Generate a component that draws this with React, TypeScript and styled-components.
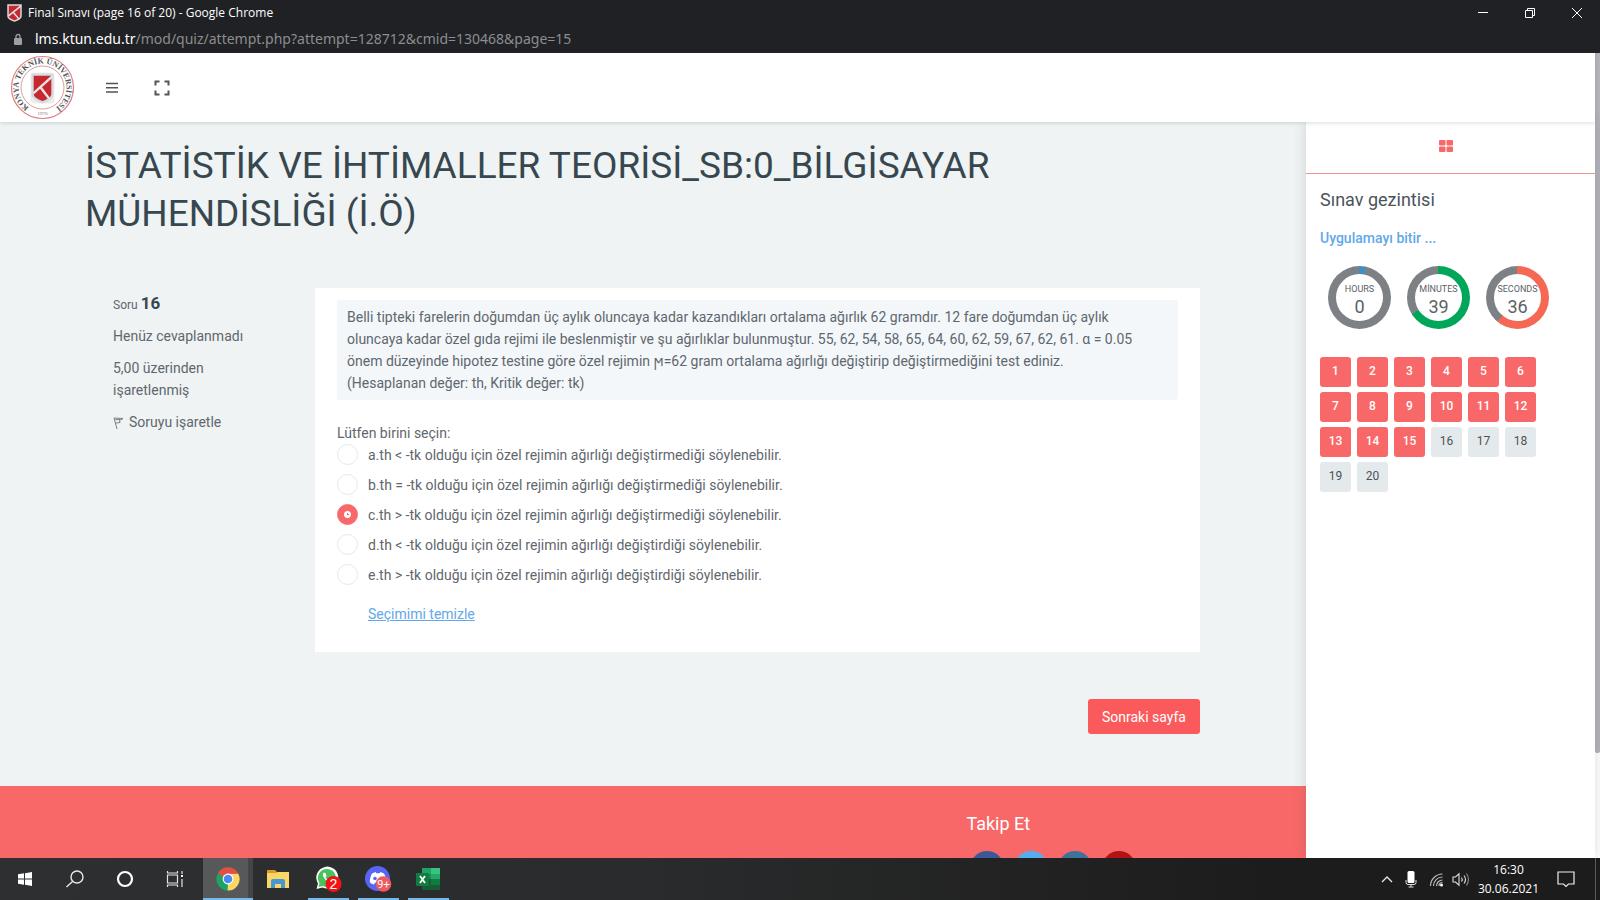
import React, { useState } from "react";
import styled, { createGlobalStyle, css } from "styled-components";

const GlobalStyle = createGlobalStyle`
  * { box-sizing: border-box; }
  body { margin: 0; overflow: hidden; background: #eff3f4; }
  body, button, input { font-family: Roboto, "Noto Sans", sans-serif; }
  h1, h2, h3, p, ul, ol, fieldset, legend { margin: 0; padding: 0; border: 0; font-weight: 400; }
  ul, ol { list-style: none; }
  button { border: 0; background: none; padding: 0; color: inherit; cursor: pointer; }
  svg { display: block; flex: none; }
`;

const Screen = styled.div`
  height: 100vh;
  display: flex;
  flex-direction: column;
  color: #5f676e;
  font-size: 14px;
  line-height: 22px;
`;

/* Browser window */
const TitleBar = styled.div`
  flex: none;
  display: flex;
  align-items: center;
  height: 25px;
  padding: 0 0 0 7px;
  gap: 6px;
  background: #202124;
  color: #fff;
  font: 12px/24px "Open Sans", sans-serif;
`;
const WindowControls = styled.div`
  margin-left: auto;
  display: flex;
  align-items: center;
`;
const WindowButton = styled.button`
  width: 47px;
  height: 24px;
  display: grid;
  place-items: center;
`;
const AddressBar = styled.div`
  flex: none;
  display: flex;
  align-items: center;
  height: 28px;
  padding: 0 12px;
  gap: 11px;
  background: #202124;
  color: #8b8d91;
  font: 14px/28px "Noto Sans", sans-serif;
  b { color: #fff; font-weight: 400; }
`;

/* Site */
const Site = styled.div`
  flex: 1;
  min-height: 0;
  display: flex;
`;
const SiteBody = styled.div`
  flex: 1;
  min-width: 0;
  display: flex;
  flex-direction: column;
`;
const ScrollTrack = styled.div`
  flex: none;
  width: 5px;
  background: #fff;
`;
const ScrollThumb = styled.div`
  height: 87%;
  background: #b3b3ba;
  border-radius: 0 0 2px 2px;
`;
const Header = styled.header`
  flex: none;
  z-index: 2;
  display: flex;
  align-items: center;
  height: 69px;
  padding-left: 10px;
  background: #fff;
  box-shadow: 0 1px 4px rgba(60, 75, 85, 0.2);
`;
const HeaderButton = styled.button`
  width: 50px;
  height: 48px;
  display: grid;
  place-items: center;
  color: #555;
`;
const HeaderTools = styled.div`
  display: flex;
  margin-left: 12px;
`;
const Columns = styled.div`
  flex: 1;
  min-height: 0;
  display: flex;
`;
const Main = styled.main`
  flex: 1;
  min-width: 0;
  display: flex;
  flex-direction: column;
  overflow: hidden;
`;
const Content = styled.div`
  flex: none;
  padding: 20px 106px 52px 85px;
`;
const Title = styled.h1`
  max-width: 960px;
  color: #37474f;
  font-size: 37px;
  line-height: 48px;
`;
const Question = styled.div`
  display: flex;
  align-items: flex-start;
  margin-top: 50px;
`;
const Info = styled.aside`
  flex: none;
  width: 230px;
  padding: 5px 60px 0 28px;
  display: flex;
  flex-direction: column;
  align-items: flex-start;
  gap: 10px;
`;
const QuestionNo = styled.h2`
  font-size: 12px;
  line-height: 20px;
  b { color: #37474f; font-size: 17px; font-weight: 700; }
`;
const FlagButton = styled.button`
  display: flex;
  align-items: center;
  gap: 5px;
  font-size: 14px;
  line-height: 22px;
`;
const Card = styled.section`
  flex: 1;
  min-width: 0;
  background: #fff;
  padding: 12px 22px 26px;
`;
const QuestionText = styled.p`
  padding: 6px 40px 6px 10px;
  border-radius: 3px;
  background: #f3f7fa;
`;
const Answers = styled.fieldset`
  margin-top: 22px;
`;
const Answer = styled.label`
  display: flex;
  align-items: flex-start;
  gap: 10px;
  height: 30px;
  cursor: pointer;
`;
const Radio = styled.input`
  appearance: none;
  flex: none;
  width: 21px;
  height: 21px;
  margin: 0;
  border: 1px solid #e4eaec;
  border-radius: 50%;
  background: #fff;
  &:checked {
    border-color: #f96868;
    background: radial-gradient(circle, #f96868 0 1px, #fff 1px 3px, #f96868 4px);
  }
`;
const ClearButton = styled.button`
  display: block;
  margin: 9px 0 0 31px;
  padding-bottom: 1px;
  color: #62a8ea;
  font-size: 14px;
  line-height: 22px;
  text-decoration: underline;
`;
const Pager = styled.div`
  display: flex;
  justify-content: flex-end;
  margin-top: 47px;
`;
const NextButton = styled.button`
  height: 35px;
  padding: 0 14px;
  border-radius: 3px;
  background: #fa5a5c;
  color: #fff;
  font-size: 14px;
`;
const Footer = styled.footer`
  flex: 1 0 auto;
  background: #f96868;
  color: #fff;
`;
const Follow = styled.div`
  width: 26%;
  margin-left: auto;
  padding: 26px 0 0;
`;
const FollowTitle = styled.h3`
  font-size: 18px;
  line-height: 24px;
`;
const Socials = styled.div`
  display: flex;
  gap: 10px;
  height: 21px;
  margin-top: 15px;
  padding-left: 4px;
  overflow: hidden;
`;
const Social = styled.a<{ $color: string }>`
  width: 34px;
  height: 34px;
  border-radius: 50%;
  background: ${(p) => p.$color};
`;

/* Quiz navigation drawer */
const Drawer = styled.aside`
  flex: none;
  z-index: 1;
  width: 289px;
  background: #fff;
  box-shadow: 0 0 12px rgba(60, 75, 85, 0.2);
`;
const DrawerTab = styled.button`
  width: 100%;
  height: 52px;
  padding: 0 9px 3px 0;
  display: grid;
  place-items: center;
  border-bottom: 1px solid #ee8f92;
`;
const DrawerBody = styled.div`
  padding: 14px;
`;
const DrawerTitle = styled.h2`
  color: #4a545c;
  font-size: 18px;
  line-height: 24px;
`;
const FinishLink = styled.a`
  display: inline-block;
  margin-top: 15px;
  color: #62a8ea;
  font-weight: 500;
  text-decoration: none;
`;
const Timers = styled.div`
  display: flex;
  gap: 16px;
  margin: 17px 0 28px 8px;
`;
const Timer = styled.div<{ $to: number; $color: string }>`
  width: 63px;
  height: 63px;
  padding: 8px;
  border-radius: 50%;
  background: conic-gradient(${(p) => p.$color} 0 ${(p) => p.$to}%, #7d8186 ${(p) => p.$to}%);
`;
const TimerFace = styled.div`
  height: 100%;
  border-radius: 50%;
  background: #fff;
  display: flex;
  flex-direction: column;
  align-items: center;
  justify-content: center;
  color: #5b6266;
  padding-top: 3px;
`;
const TimerLabel = styled.span`
  font-size: 9px;
  line-height: 16px;
`;
const TimerValue = styled.span`
  font-size: 18px;
  line-height: 20px;
`;
const QuestionGrid = styled.ol`
  display: flex;
  flex-wrap: wrap;
  gap: 5px 6px;
  width: 230px;
`;
const QuestionLink = styled.a<{ $done: boolean }>`
  display: block;
  width: 31px;
  height: 30px;
  border-radius: 3px;
  background: ${(p) => (p.$done ? "#f96868" : "#e4eaec")};
  color: ${(p) => (p.$done ? "#fff" : "#4c5256")};
  font-size: 12px;
  font-weight: ${(p) => (p.$done ? 500 : 400)};
  line-height: 29px;
  text-align: center;
  text-decoration: none;
`;

/* Desktop task bar */
const Taskbar = styled.nav`
  flex: none;
  z-index: 3;
  display: flex;
  height: 42px;
  background: linear-gradient(90deg, #2e2f30, #2a2b2c 40%, #1c1c1c 80%);
  color: #fff;
`;
const TaskGroup = styled.div`
  display: flex;
  align-items: center;
`;
const OpenApps = styled(TaskGroup)`
  margin: 0 auto 0 3px;
`;
const TaskButton = styled.button<{ $state?: "open" | "active" }>`
  width: 50px;
  height: 42px;
  display: grid;
  place-items: center;
  ${(p) =>
    p.$state === "active" &&
    css`background: linear-gradient(#76b9ed, #76b9ed) center bottom / 100% 2px no-repeat, linear-gradient(90deg, #575859 45px, #434546 45px);`}
  ${(p) =>
    p.$state === "open" &&
    css`background: linear-gradient(#76b9ed, #76b9ed) center bottom / 41px 2px no-repeat;`}
`;
const TrayButton = styled.button<{ $width: number }>`
  width: ${(p) => p.$width}px;
  height: 42px;
  display: grid;
  place-items: center;
`;
const Clock = styled.div`
  width: 73px;
  text-align: center;
  font: 12px/19px "Open Sans", sans-serif;
`;
const DesktopEdge = styled.div`
  width: 5px;
  height: 42px;
  margin-left: 8px;
  border-left: 1px solid #5a5a5a;
`;

const Shield = ({ x = 0, y = 0, w = 15, h = 18 }) => (
  <svg x={x} y={y} width={w} height={h} viewBox="0 0 30 38" preserveAspectRatio="none">
    <path d="M2 2h26v24c0 5-7 8-13 10C9 34 2 31 2 26z" fill="#c5292f" stroke="#d9dadd" strokeWidth="3" />
    <path d="M28 4 3 25M12 17l12 15" stroke="#e8e4e6" strokeWidth="3" fill="none" />
  </svg>
);

const UniversityLogo = () => (
  <svg width="65" height="65" viewBox="0 0 65 65" role="img" aria-label="Konya Teknik Üniversitesi">
    <circle cx="32.500" cy="32.500" r="31" fill="#fff" stroke="#dc7f84" strokeWidth="1.200" />
    <circle cx="32.500" cy="32.500" r="21.500" fill="none" stroke="#dc9a9e" strokeWidth="1" />
    <defs>
      <path id="ring" d="M21.500 53.800A24 24 0 1 1 43.500 53.800" />
    </defs>
    <text fontFamily="Liberation Serif, serif" fontWeight="700" fontSize="8" fill="#555">
      <textPath href="#ring" startOffset="50%" textAnchor="middle">KONYA TEKNİK ÜNİVERSİTESİ</textPath>
    </text>
    <rect x="20.500" y="17.500" width="24" height="31" rx="4" fill="#dfe1e4" opacity=".6" />
    <Shield x={21} y={18} w={23} h={31} />
    <text x="32.500" y="60" fontFamily="Liberation Serif, serif" fontSize="5" fill="#777" textAnchor="middle">1970</text>
  </svg>
);

const MenuIcon = () => (
  <svg width="14" height="14" viewBox="0 0 14 14" stroke="currentColor" strokeWidth="1.600">
    <path d="M1 2.500h12M1 6.700h12M1 11h12" />
  </svg>
);
const ExpandIcon = () => (
  <svg width="16" height="16" viewBox="0 0 16 16" fill="none" stroke="currentColor" strokeWidth="2">
    <path d="M1.500 5.500v-4h4M10.500 1.500h4v4M14.500 10.500v4h-4M5.500 14.500h-4v-4" />
  </svg>
);
const FlagIcon = () => (
  <svg width="11" height="16" viewBox="0 0 11 16" fill="none" stroke="#777e84" strokeWidth="1">
    <path d="M1 4 10 4.500 6.500 6.500 7 8.500 3 9M1 4 4 15M2.300 5.700 7 5.500" />
  </svg>
);
const GridIcon = () => (
  <svg width="14" height="12" viewBox="0 0 14 12" fill="#f96868">
    <rect width="6.500" height="5.500" rx="1" />
    <rect x="7.500" width="6.500" height="5.500" rx="1" />
    <rect y="6.500" width="6.500" height="5.500" rx="1" />
    <rect x="7.500" y="6.500" width="6.500" height="5.500" rx="1" />
  </svg>
);
const LockIcon = () => (
  <svg width="12" height="13" viewBox="0 0 12 13">
    <rect x="2" y="5" width="8" height="7" rx="1" fill="#9aa0a6" />
    <path d="M4 6V3.500a2 2 0 0 1 4 0V6" fill="none" stroke="#9aa0a6" strokeWidth="1.300" />
  </svg>
);

const WindowsIcon = () => (
  <svg width="16" height="16" viewBox="0 0 16 16" fill="#fff">
    <path d="M1 3.200 7 2.300v5.200H1zM8 2.200 15 1v6.500H8zM1 8.500h6v5.200l-6-.9zM8 8.500h7V15l-7-1.200z" />
  </svg>
);
const SearchIcon = () => (
  <svg width="20" height="20" viewBox="0 0 20 20" fill="none" stroke="#e8e8e8" strokeWidth="1.400">
    <circle cx="12" cy="8" r="6" />
    <path d="M7.800 12.200 1.500 18" />
  </svg>
);
const CortanaIcon = () => (
  <svg width="18" height="18" viewBox="0 0 18 18">
    <circle cx="9" cy="9" r="7" fill="none" stroke="#fff" strokeWidth="2.200" />
  </svg>
);
const TaskViewIcon = () => (
  <svg width="20" height="18" viewBox="0 0 20 18" fill="none" stroke="#e3e3e3" strokeWidth="1.200">
    <path d="M2.500 5h10v8h-10zM2.500 1v2h10V1M2.500 17v-2h10v2M17 1v3M17 9v8" />
    <rect x="16" y="5" width="2" height="2" fill="#fff" stroke="none" />
  </svg>
);
const ChromeIcon = () => (
  <svg width="24" height="24" viewBox="0 0 24 24">
    <path d="M12 12 2 6a11.500 11.500 0 0 1 20 0z" fill="#de5246" />
    <path d="M12 12 22 6.200A11.500 11.500 0 0 1 11.500 23.500z" fill="#fdd663" />
    <path d="M12 12v11.500A11.500 11.500 0 0 1 2 6.200z" fill="#1da462" />
    <path d="M12 6.500h10.200L17 14z" fill="#fdd663" />
    <path d="M17 14.500 11.500 23.500 12 17z" fill="#fdd663" />
    <path d="M2 6.200 7 14.800 12 12z" fill="#1da462" />
    <path d="M2 6h20v.8H12l-5 3z" fill="#de5246" />
    <circle cx="12" cy="12" r="5.400" fill="#fff" />
    <circle cx="12" cy="12" r="4.300" fill="#4a8af4" />
  </svg>
);
const FolderIcon = () => (
  <svg width="24" height="20" viewBox="0 0 24 20">
    <path d="M1 1h8l2 2h12v4H1z" fill="#d99d21" />
    <path d="M1 4h9l2-1h11v16H1z" fill="#fbd568" />
    <path d="M5 19v-7a2 2 0 0 1 2-2h10a2 2 0 0 1 2 2v7h-4v-4H9v4z" fill="#4698ce" />
  </svg>
);
const WhatsAppIcon = () => (
  <svg width="28" height="28" viewBox="0 0 28 28">
    <path d="M2.500 24 4 18.500a11 11 0 1 1 4.500 4z" fill="#fff" />
    <path d="M4.500 22 5.500 18a9 9 0 1 1 3.500 3z" fill="#48c35b" />
    <path d="M10 7.500c-2 1.500-1 4 1 6.500s5 4.500 7 3.500l1-2-3-1.500-1.500 1.200c-1.500-.7-2.500-2-3-3L12.500 11l-1-3z" fill="#fff" />
    <circle cx="19.500" cy="19" r="8" fill="#f01414" />
    <text x="19.500" y="24" textAnchor="middle" fontFamily="Liberation Sans, sans-serif" fontSize="14" fill="#fff">2</text>
  </svg>
);
const DiscordIcon = () => (
  <svg width="28" height="28" viewBox="0 0 28 28">
    <circle cx="13.500" cy="13.500" r="12.500" fill="#5865f2" />
    <path d="M8 8.500 11.500 7l1 1.200h3L16.500 7 20 8.500c1.500 3 2.500 6 2 9-1.300 1.300-2.700 1.500-4 2l-1.300-2h-5.400l-1.300 2c-1.300-.5-2.700-.7-4-2-.5-3 .5-6 2-9z" fill="#fff" />
    <circle cx="11" cy="13.500" r="1.800" fill="#5865f2" />
    <circle cx="17" cy="13.500" r="1.800" fill="#5865f2" />
    <circle cx="19.500" cy="19" r="7.800" fill="#ed5a60" />
    <text x="19.500" y="23" textAnchor="middle" fontFamily="Roboto, sans-serif" fontSize="11" fill="#fff">9+</text>
  </svg>
);
const ExcelIcon = () => (
  <svg width="25" height="24" viewBox="0 0 25 24">
    <rect x="6" y="1" width="18" height="22" rx="1" fill="#1e8a53" />
    <rect x="15" y="1" width="9" height="6" fill="#35c481" />
    <rect x="6" y="1" width="9" height="6" fill="#21a366" />
    <rect x="6" y="12" width="9" height="11" fill="#185c37" />
    <rect x="15" y="7" width="9" height="5" fill="#27a767" />
    <rect x="15" y="12" width="9" height="6" fill="#107c41" />
    <rect x="15" y="18" width="9" height="5" fill="#185c37" />
    <rect y="6" width="13" height="13" rx="1" fill="#107c41" />
    <path d="m4 9 5 7M9 9l-5 7" stroke="#fff" strokeWidth="1.800" />
  </svg>
);
const ChevronIcon = () => (
  <svg width="12" height="8" viewBox="0 0 12 8" fill="none" stroke="#e5e5e5" strokeWidth="1.400">
    <path d="m1 7 5-5 5 5" />
  </svg>
);
const MicIcon = () => (
  <svg width="12" height="18" viewBox="0 0 12 18">
    <rect x="2.500" y="1" width="7" height="12" rx="1.500" fill="#fff" />
    <path d="M1 10v2.500q0 2 2 2h6q2 0 2-2V10M6 14.500V17M3.500 17h5" fill="none" stroke="#ddd" strokeWidth="1" />
  </svg>
);
const WifiIcon = () => (
  <svg width="15" height="15" viewBox="0 0 15 15" fill="none" stroke="#bbb" strokeWidth="1.200">
    <path d="M1.500 14A12 12 0 0 1 13.500 2M4.500 14a9 9 0 0 1 9-9M7.500 14a6 6 0 0 1 6-6" />
    <circle cx="12.500" cy="13" r="1.500" fill="#fff" stroke="none" />
    <path d="M10 14a3.500 3.500 0 0 1 3.500-3.500" />
  </svg>
);
const VolumeIcon = () => (
  <svg width="18" height="15" viewBox="0 0 18 15" fill="none" stroke="#ddd" strokeWidth="1.100">
    <path d="M1 5h2.500L7 1.800v11.400L3.500 10H1zM9.500 5.500q1.500 2 0 4M12 3.500q3 4 0 8" />
    <path d="M14.500 1.500q4 6 0 12" stroke="#888" />
  </svg>
);
const NoticeIcon = () => (
  <svg width="18" height="18" viewBox="0 0 18 18" fill="none" stroke="#eee" strokeWidth="1.200">
    <path d="M1 2h16v12h-5.500L9 16.500 6.500 14H1z" />
  </svg>
);

const answers = [
  "a.th < -tk olduğu için özel rejimin ağırlığı değiştirmediği söylenebilir.",
  "b.th = -tk olduğu için özel rejimin ağırlığı değiştirmediği söylenebilir.",
  "c.th > -tk olduğu için özel rejimin ağırlığı değiştirmediği söylenebilir.",
  "d.th < -tk olduğu için özel rejimin ağırlığı değiştirdiği söylenebilir.",
  "e.th > -tk olduğu için özel rejimin ağırlığı değiştirdiği söylenebilir.",
];
const timers = [
  { label: "HOURS", value: 0, to: 3, color: "#3f8fc5" },
  { label: "MİNUTES", value: 39, to: 66, color: "#00a65a" },
  { label: "SECONDS", value: 36, to: 61, color: "#f56954" },
];
const socials = [
  { name: "Facebook", color: "#3b5998" },
  { name: "Twitter", color: "#55acee" },
  { name: "Instagram", color: "#3f729b" },
  { name: "YouTube", color: "#b31217" },
];

export default function App() {
  const [choice, setChoice] = useState<number | null>(2);
  return (
    <Screen>
      <GlobalStyle />
      <TitleBar>
        <Shield />
        <span>Final Sınavı (page 16 of 20) - Google Chrome</span>
        <WindowControls>
          <WindowButton aria-label="Minimize">
            <svg width="10" height="10" stroke="#fff"><path d="M0 4.500h10" /></svg>
          </WindowButton>
          <WindowButton aria-label="Restore">
            <svg width="10" height="10" fill="none" stroke="#fff"><path d="M.5 2.500h7v7h-7zM2.500 2.500v-2h7v7h-2" /></svg>
          </WindowButton>
          <WindowButton aria-label="Close">
            <svg width="10" height="10" stroke="#fff"><path d="m0 0 10 10M10 0 0 10" /></svg>
          </WindowButton>
        </WindowControls>
      </TitleBar>
      <AddressBar>
        <LockIcon />
        <span><b>lms.ktun.edu.tr</b>/mod/quiz/attempt.php?attempt=128712&amp;cmid=130468&amp;page=15</span>
      </AddressBar>
      <Site>
        <SiteBody>
          <Header>
            <UniversityLogo />
            <HeaderTools>
              <HeaderButton aria-label="Menu"><MenuIcon /></HeaderButton>
              <HeaderButton aria-label="Full screen"><ExpandIcon /></HeaderButton>
            </HeaderTools>
          </Header>
          <Columns>
            <Main>
              <Content>
                <Title>İSTATİSTİK VE İHTİMALLER TEORİSİ_SB:0_BİLGİSAYAR MÜHENDİSLİĞİ (İ.Ö)</Title>
                <Question>
                  <Info>
                    <QuestionNo>Soru <b>16</b></QuestionNo>
                    <p>Henüz cevaplanmadı</p>
                    <p>5,00 üzerinden işaretlenmiş</p>
                    <FlagButton><FlagIcon />Soruyu işaretle</FlagButton>
                  </Info>
                  <Card>
                    <QuestionText>
                      Belli tipteki farelerin doğumdan üç aylık oluncaya kadar kazandıkları ortalama ağırlık 62 gramdır. 12 fare doğumdan üç aylık oluncaya kadar özel gıda rejimi ile beslenmiştir ve şu ağırlıklar bulunmuştur. 55, 62, 54, 58, 65, 64, 60, 62, 59, 67, 62, 61. α = 0.05 önem düzeyinde hipotez testine göre özel rejimin ϻ=62 gram ortalama ağırlığı değiştirip değiştirmediğini test ediniz. (Hesaplanan değer: th, Kritik değer: tk)
                    </QuestionText>
                    <Answers>
                      <legend>Lütfen birini seçin:</legend>
                      {answers.map((text, i) => (
                        <Answer key={text}>
                          <Radio type="radio" name="answer" checked={choice === i} onChange={() => setChoice(i)} />
                          {text}
                        </Answer>
                      ))}
                    </Answers>
                    <ClearButton onClick={() => setChoice(null)}>Seçimimi temizle</ClearButton>
                  </Card>
                </Question>
                <Pager><NextButton>Sonraki sayfa</NextButton></Pager>
              </Content>
              <Footer>
                <Follow>
                  <FollowTitle>Takip Et</FollowTitle>
                  <Socials>
                    {socials.map((s) => <Social key={s.name} href="#" aria-label={s.name} $color={s.color} />)}
                  </Socials>
                </Follow>
              </Footer>
            </Main>
            <Drawer>
              <DrawerTab aria-label="Blocks"><GridIcon /></DrawerTab>
              <DrawerBody>
                <DrawerTitle>Sınav gezintisi</DrawerTitle>
                <FinishLink href="#">Uygulamayı bitir ...</FinishLink>
                <Timers>
                  {timers.map((t) => (
                    <Timer key={t.label} $to={t.to} $color={t.color}>
                      <TimerFace>
                        <TimerLabel>{t.label}</TimerLabel>
                        <TimerValue>{t.value}</TimerValue>
                      </TimerFace>
                    </Timer>
                  ))}
                </Timers>
                <QuestionGrid>
                  {Array.from({ length: 20 }, (_, i) => (
                    <li key={i}><QuestionLink href="#" $done={i < 15}>{i + 1}</QuestionLink></li>
                  ))}
                </QuestionGrid>
              </DrawerBody>
            </Drawer>
          </Columns>
        </SiteBody>
        <ScrollTrack><ScrollThumb /></ScrollTrack>
      </Site>
      <Taskbar>
        <TaskGroup>
          <TaskButton aria-label="Start"><WindowsIcon /></TaskButton>
          <TaskButton aria-label="Search"><SearchIcon /></TaskButton>
          <TaskButton aria-label="Cortana"><CortanaIcon /></TaskButton>
          <TaskButton aria-label="Task view"><TaskViewIcon /></TaskButton>
        </TaskGroup>
        <OpenApps>
          <TaskButton aria-label="Chrome" $state="active"><ChromeIcon /></TaskButton>
          <TaskButton aria-label="Files"><FolderIcon /></TaskButton>
          <TaskButton aria-label="WhatsApp" $state="open"><WhatsAppIcon /></TaskButton>
          <TaskButton aria-label="Discord" $state="open"><DiscordIcon /></TaskButton>
          <TaskButton aria-label="Excel" $state="open"><ExcelIcon /></TaskButton>
        </OpenApps>
        <TaskGroup>
          <TrayButton $width={25} aria-label="Hidden icons"><ChevronIcon /></TrayButton>
          <TrayButton $width={24} aria-label="Microphone"><MicIcon /></TrayButton>
          <TrayButton $width={27} aria-label="Network"><WifiIcon /></TrayButton>
          <TrayButton $width={22} aria-label="Volume"><VolumeIcon /></TrayButton>
          <Clock>16:30<br />30.06.2021</Clock>
          <TrayButton $width={42} aria-label="Notifications"><NoticeIcon /></TrayButton>
          <DesktopEdge />
        </TaskGroup>
      </Taskbar>
    </Screen>
  );
}
